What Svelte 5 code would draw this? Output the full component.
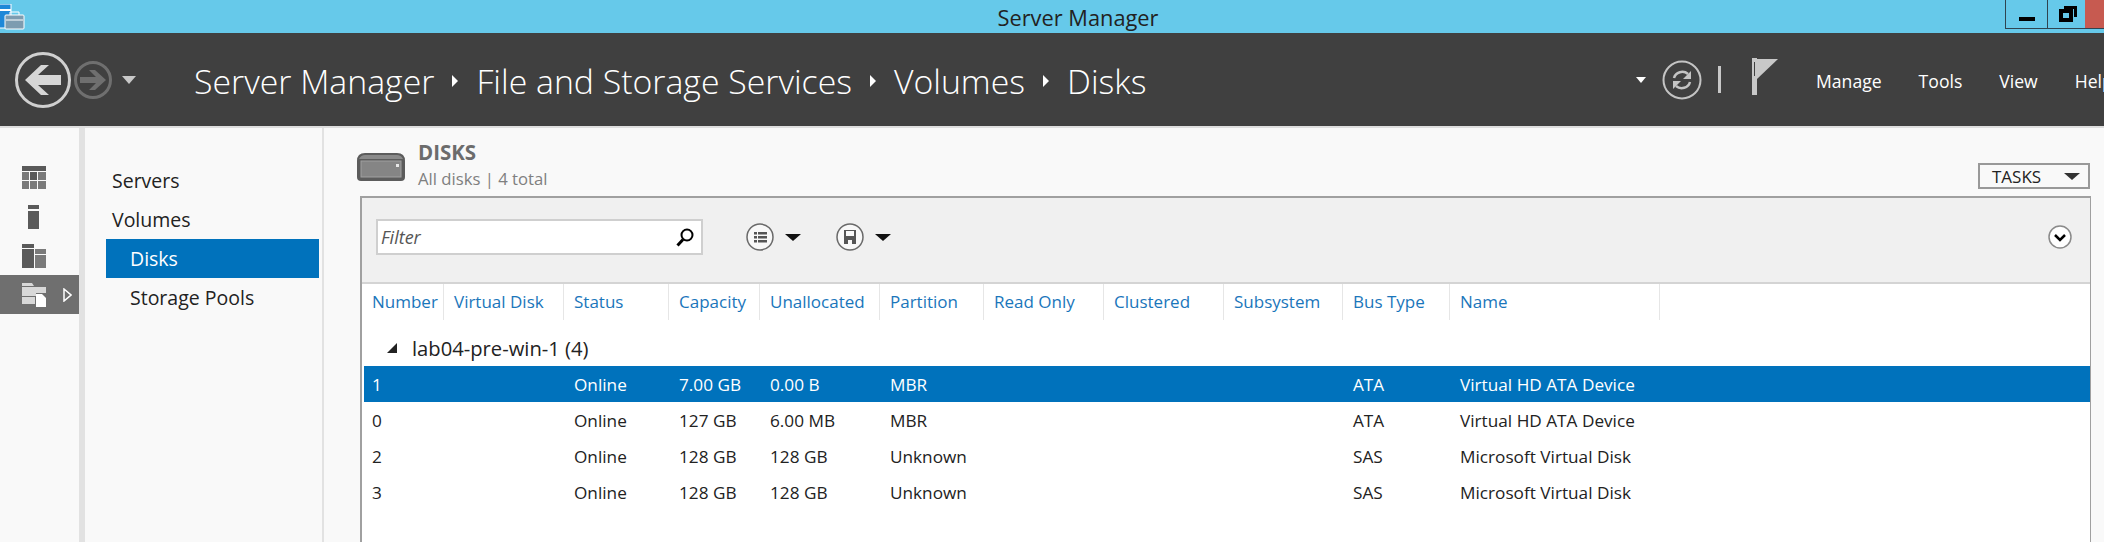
<script>
	const crumbs = ['Server Manager', 'File and Storage Services', 'Volumes', 'Disks'];
	const menus = ['Manage', 'Tools', 'View', 'Help'];
	const columns = ['Number', 'Virtual Disk', 'Status', 'Capacity', 'Unallocated', 'Partition', 'Read Only', 'Clustered', 'Subsystem', 'Bus Type', 'Name'];
	const disks = [
		['1', '', 'Online', '7.00 GB', '0.00 B', 'MBR', '', '', '', 'ATA', 'Virtual HD ATA Device'],
		['0', '', 'Online', '127 GB', '6.00 MB', 'MBR', '', '', '', 'ATA', 'Virtual HD ATA Device'],
		['2', '', 'Online', '128 GB', '128 GB', 'Unknown', '', '', '', 'SAS', 'Microsoft Virtual Disk'],
		['3', '', 'Online', '128 GB', '128 GB', 'Unknown', '', '', '', 'SAS', 'Microsoft Virtual Disk']
	];
</script>

<div class="window">
	<header class="titlebar">
		<svg class="app-icon" width="25" height="26" viewBox="0 0 25 26">
			<rect x="-2" y="0" width="13" height="24" fill="#1e88d8" stroke="#fff" />
			<rect x="-2" y="5" width="13" height="2" fill="#fff" />
			<rect x="5" y="11" width="19" height="14" rx="1" fill="#7d9cb0" stroke="#fff" />
			<path d="M10 11V8h9v3" fill="none" stroke="#fff" />
			<path d="M6 16h17" stroke="#fff" />
		</svg>
		<span class="title">Server Manager</span>
		<div class="winbtns">
			<div class="winbtn min"><span class="min-bar"></span></div>
			<div class="winbtn restore">
				<svg width="18" height="16" viewBox="0 0 18 16">
					<path d="M5 0h13v11h-3V3H5z" fill="#000" />
					<path fill-rule="evenodd" d="M0 3h14v13H0zM4 7v5h6V7z" fill="#000" />
				</svg>
			</div>
			<div class="winbtn close"></div>
		</div>
	</header>

	<nav class="navbar">
		<svg class="back" width="58" height="58" viewBox="0 0 58 58">
			<circle cx="29" cy="29" r="26.5" fill="none" stroke="#d0d0d0" stroke-width="3" />
			<path d="M11 29 27 14h8L24 24h23v10H24l11 10h-8z" fill="#d6d6d6" />
		</svg>
		<svg class="forward" width="38" height="40" viewBox="0 0 38 40">
			<circle cx="19" cy="20" r="17.5" fill="none" stroke="#6f6f6f" stroke-width="3" />
			<path d="M32 20 21 10h-6l7 7H6v6h16l-7 7h6z" fill="#6f6f6f" />
		</svg>
		<span class="hist-arrow"></span>
		<div class="crumbs">
			{#each crumbs as crumb, i}
				{#if i > 0}<span class="crumb-sep"></span>{/if}
				<span>{crumb}</span>
			{/each}
		</div>
		<span class="drop-arrow"></span>
		<svg class="refresh" width="40" height="40" viewBox="0 0 40 40">
			<circle cx="20" cy="20" r="18.5" fill="none" stroke="#c4c4c4" stroke-width="2" />
			<g fill="none" stroke="#c4c4c4" stroke-width="2.5">
				<path d="M12 18a8.500 8 0 0 1 14-4" />
				<path d="M28 22a8.500 8 0 0 1-14 4" />
			</g>
			<path d="M29 11v8h-8z" fill="#c4c4c4" />
			<path d="M11 29v-8h8z" fill="#c4c4c4" />
		</svg>
		<span class="nav-sep"></span>
		<svg class="flag" width="26" height="37" viewBox="0 0 26 37">
			<rect x="0" y="0" width="5" height="37" fill="#c8c8c8" />
			<rect x="2" y="4" width="1" height="14" fill="#404040" />
			<path d="M5 1h21L5 21z" fill="#c8c8c8" />
		</svg>
		<div class="menus">
			{#each menus as menu}
				<span>{menu}</span>
			{/each}
		</div>
	</nav>

	<div class="main">
		<aside class="rail">
			<div class="rail-item">
				<svg width="24" height="23" viewBox="0 0 24 23" fill="#5a5a5a">
					<rect width="24" height="5" />
					<rect y="6" width="7" height="8" fill="#7a7a7a" />
					<rect x="8" y="6" width="7" height="8" />
					<rect x="16" y="6" width="8" height="8" fill="#7a7a7a" />
					<rect y="15" width="7" height="8" fill="#7a7a7a" />
					<rect x="8" y="15" width="7" height="8" fill="#7a7a7a" />
					<rect x="16" y="15" width="8" height="8" fill="#7a7a7a" />
				</svg>
			</div>
			<div class="rail-item">
				<svg width="11" height="24" viewBox="0 0 11 24" fill="#5a5a5a">
					<rect width="11" height="4" />
					<rect y="6" width="11" height="18" />
				</svg>
			</div>
			<div class="rail-item">
				<svg width="24" height="24" viewBox="0 0 24 24" fill="#5a5a5a">
					<rect width="12" height="4" />
					<rect y="5" width="12" height="19" />
					<rect x="13" y="5" width="11" height="5" fill="#7a7a7a" />
					<rect x="13" y="11" width="11" height="13" fill="#7a7a7a" />
				</svg>
			</div>
			<div class="rail-item active">
				<svg width="24" height="24" viewBox="0 0 24 24">
					<path d="M0 0h10l2 3H0zM0 4h24v6h-10v3H0z" fill="#d8d8d8" />
					<path d="M0 14h13v7H0z" fill="#d8d8d8" />
					<path d="M14 11h6l4 4v9H14z" fill="#fff" />
				</svg>
				<svg class="rail-caret" width="9" height="14" viewBox="0 0 9 14">
					<path d="M1 1l7 6-7 6z" fill="none" stroke="#fff" stroke-width="1.5" />
				</svg>
			</div>
		</aside>

		<aside class="sidenav">
			<div class="nav-item">Servers</div>
			<div class="nav-item">Volumes</div>
			<div class="nav-item sub selected">Disks</div>
			<div class="nav-item sub">Storage Pools</div>
		</aside>

		<section class="content">
			<div class="section-head">
				<svg class="disk-icon" width="48" height="28" viewBox="0 0 48 28">
					<path d="M0 8Q0 0 8 0h32q8 0 8 8v16q0 4-4 4H4q-4 0-4-4z" fill="#5c5c5c" />
					<path d="M2 6q2-4 6-4h32q4 0 6 4z" fill="#8a8a8a" />
					<rect x="4" y="8" width="40" height="16" fill="#858585" stroke="#a0a0a0" />
					<rect x="39" y="11" width="3" height="3" fill="#e8e8e8" />
				</svg>
				<div class="section-text">
					<div class="section-title">DISKS</div>
					<div class="section-sub">All disks | 4 total</div>
				</div>
				<div class="tasks">
					<span>TASKS</span>
					<span class="tasks-arrow"></span>
				</div>
			</div>

			<div class="panel">
				<div class="toolbar">
					<div class="filter">
						<span>Filter</span>
						<svg width="18" height="19" viewBox="0 0 18 19">
							<circle cx="11" cy="7" r="5.5" fill="none" stroke="#000" stroke-width="2" />
							<path d="M7 11.5 1.5 17.5" stroke="#000" stroke-width="3" />
						</svg>
					</div>
					<div class="tool">
						<svg width="28" height="28" viewBox="0 0 28 28">
							<circle cx="14" cy="14" r="13" fill="#f8f8f8" stroke="#6a6a6a" stroke-width="1.5" />
							<g fill="#555">
								<rect x="8" y="9" width="3" height="2.5" /><rect x="12" y="9" width="9" height="2.5" />
								<rect x="8" y="13" width="3" height="2.5" /><rect x="12" y="13" width="9" height="2.5" />
								<rect x="8" y="17" width="3" height="2.5" /><rect x="12" y="17" width="9" height="2.5" />
							</g>
						</svg>
						<span class="tool-arrow"></span>
					</div>
					<div class="tool">
						<svg width="28" height="28" viewBox="0 0 28 28">
							<circle cx="14" cy="14" r="13" fill="#f8f8f8" stroke="#6a6a6a" stroke-width="1.5" />
							<path d="M8 7h12v14H8z" fill="#555" />
							<rect x="10" y="8" width="8" height="5" fill="#f8f8f8" />
							<rect x="12" y="17" width="4" height="4" fill="#f8f8f8" />
						</svg>
						<span class="tool-arrow"></span>
					</div>
					<svg class="collapse" width="24" height="24" viewBox="0 0 24 24">
						<circle cx="12" cy="12" r="11" fill="#fff" stroke="#8a8a8a" stroke-width="1.5" />
						<path d="M7 10l5 5 5-5" fill="none" stroke="#000" stroke-width="2.5" />
					</svg>
				</div>

				<div class="grid head">
					{#each columns as col}
						<div class="th">{col}</div>
					{/each}
				</div>

				<div class="group">
					<svg width="10" height="10" viewBox="0 0 10 10"><path d="M10 0v10H0z" fill="#222" /></svg>
					<span>lab04-pre-win-1 (4)</span>
				</div>

				{#each disks as disk, i}
					<div class="grid row" class:picked={i === 0}>
						{#each disk as cell}
							<div class="td">{cell}</div>
						{/each}
					</div>
				{/each}
			</div>
		</section>
	</div>
</div>

<style>
	:global(body) {
		margin: 0;
		background: #f9f9f9;
	}

	.window {
		width: 2104px;
		height: 542px;
		overflow: hidden;
		display: flex;
		flex-direction: column;
		font-family: 'Open Sans', sans-serif;
		color: #222;
	}

	.titlebar {
		position: relative;
		height: 33px;
		flex: none;
		background: #66c9ea;
		display: flex;
		justify-content: center;
		padding-left: 52px;
		box-sizing: border-box;
	}

	.app-icon {
		position: absolute;
		left: 0;
		top: 4px;
	}

	.title {
		font-size: 21.8px;
		line-height: 35px;
		color: #222;
	}

	.winbtns {
		position: absolute;
		right: 0;
		top: 0;
		display: flex;
		height: 30px;
	}

	.winbtn {
		height: 29px;
		box-sizing: border-box;
		border-bottom: 1px solid #2f4450;
		border-left: 1px solid #2f4450;
	}

	.min {
		width: 42px;
		position: relative;
	}

	.min-bar {
		position: absolute;
		left: 13px;
		top: 17px;
		width: 16px;
		height: 4px;
		background: #000;
	}

	.restore {
		width: 38px;
		padding: 6px 0 0 11px;
	}

	.restore svg {
		display: block;
	}

	.close {
		width: 19px;
		background: #c75a50;
		border-left: 0;
	}

	.navbar {
		height: 93px;
		flex: none;
		background: #404040;
		display: flex;
		align-items: center;
		padding-left: 14px;
		color: #fff;
		overflow: hidden;
	}

	.navbar > * {
		flex: none;
	}

	.forward {
		margin-left: 2px;
	}

	.hist-arrow {
		margin-left: 10px;
		border-left: 7px solid transparent;
		border-right: 7px solid transparent;
		border-top: 8px solid #c8c8c8;
	}

	.crumbs {
		margin-left: 58px;
		display: flex;
		align-items: center;
		gap: 18px;
		font-size: 33.8px;
		font-weight: 300;
		width: 1050px;
		white-space: nowrap;
		padding-top: 2px;
	}

	.crumb-sep {
		border-top: 6px solid transparent;
		border-bottom: 6px solid transparent;
		border-left: 6px solid #fff;
	}

	.drop-arrow {
		margin-left: 392px;
		border-left: 5px solid transparent;
		border-right: 5px solid transparent;
		border-top: 6px solid #fff;
	}

	.refresh {
		margin-left: 16px;
	}

	.nav-sep {
		width: 3px;
		height: 27px;
		margin-left: 16px;
		background: #c8c8c8;
	}

	.flag {
		margin-left: 31px;
		margin-bottom: 6px;
	}

	.menus {
		margin-left: 38px;
		display: flex;
		gap: 37px;
		font-size: 17.6px;
		white-space: nowrap;
		padding-top: 2px;
	}

	.main {
		flex: 1;
		display: flex;
		min-height: 0;
		border-top: 2px solid #dedede;
	}

	.rail {
		width: 79px;
		flex: none;
		border-right: 6px solid #e2e2e2;
		padding-top: 30px;
	}

	.rail-item {
		position: relative;
		height: 39px;
		display: flex;
		align-items: center;
		padding-left: 22px;
		box-sizing: border-box;
	}

	.rail-item:nth-child(2) {
		padding-left: 28px;
	}

	.rail-item.active {
		background: #6f6f6f;
	}

	.rail-caret {
		position: absolute;
		left: 63px;
		top: 13px;
	}

	.sidenav {
		flex: none;
		border-right: 2px solid #e2e2e2;
		padding: 33px 3px 0 21px;
		width: 213px;
	}

	.nav-item {
		height: 39px;
		line-height: 40px;
		font-size: 19.5px;
		padding-left: 6px;
		color: #222;
	}

	.nav-item.sub {
		padding-left: 24px;
	}

	.nav-item.selected {
		background: #0072bc;
		color: #fff;
	}

	.content {
		flex: 1;
		display: flex;
		flex-direction: column;
		padding: 0 13px 0 36px;
		min-width: 0;
	}

	.section-head {
		height: 68px;
		flex: none;
		display: flex;
		align-items: flex-start;
	}

	.disk-icon {
		margin: 25px 0 0 -3px;
	}

	.section-text {
		margin: 11px 0 0 13px;
	}

	.section-title {
		font-size: 20.5px;
		font-weight: 700;
		color: #6c6c6c;
		line-height: 27px;
	}

	.section-sub {
		font-size: 16.7px;
		color: #7f7f7f;
		line-height: 25px;
	}

	.tasks {
		margin: 35px 1px 0 auto;
		width: 112px;
		height: 26px;
		box-sizing: border-box;
		border: 2px solid #999;
		display: flex;
		align-items: center;
		justify-content: space-between;
		padding: 0 8px 0 12px;
		font-size: 17px;
		color: #222;
	}

	.tasks-arrow {
		border-left: 8px solid transparent;
		border-right: 8px solid transparent;
		border-top: 7px solid #333;
	}

	.panel {
		flex: 1;
		background: #fff;
		border: 1px solid #a0a0a0;
		border-left-width: 2px;
		border-top-width: 2px;
		border-bottom: 0;
		display: flex;
		flex-direction: column;
	}

	.toolbar {
		height: 86px;
		flex: none;
		box-sizing: border-box;
		background: #f0f0f0;
		border-bottom: 2px solid #d4d4d4;
		display: flex;
		align-items: center;
		padding: 0 18px 6px 14px;
	}

	.filter {
		width: 327px;
		height: 36px;
		box-sizing: border-box;
		background: #fff;
		border: 2px solid #cfcfcf;
		display: flex;
		align-items: center;
		justify-content: space-between;
		padding: 0 7px 0 3px;
		font-style: italic;
		font-size: 18px;
		color: #555;
	}

	.tool {
		display: flex;
		align-items: center;
		gap: 11px;
		margin-left: 43px;
	}

	.tool + .tool {
		margin-left: 35px;
	}

	.tool-arrow {
		border-left: 8px solid transparent;
		border-right: 8px solid transparent;
		border-top: 7px solid #111;
	}

	.collapse {
		margin-left: auto;
	}

	.grid {
		display: grid;
		grid-template-columns: 80px 120px 105px 91px 120px 104px 120px 120px 119px 107px 210px 1fr;
		margin-left: 2px;
	}

	.head {
		height: 36px;
		flex: none;
		margin-bottom: 10px;
	}

	.th {
		padding-left: 10px;
		line-height: 36px;
		font-size: 17px;
		color: #1a76bb;
		white-space: nowrap;
		border-right: 1px solid #e6e6e6;
		box-sizing: border-box;
	}

	.th:first-child,
	.td:first-child {
		padding-left: 8px;
	}

	.group {
		height: 36px;
		flex: none;
		display: flex;
		align-items: center;
		gap: 15px;
		padding-left: 25px;
		font-size: 20.2px;
		color: #222;
	}

	.row {
		height: 36px;
		flex: none;
		line-height: 37px;
		font-size: 17.2px;
		color: #222;
	}

	.row.picked {
		background: #0072bc;
		color: #fff;
	}

	.td {
		padding-left: 10px;
		white-space: nowrap;
	}
</style>
